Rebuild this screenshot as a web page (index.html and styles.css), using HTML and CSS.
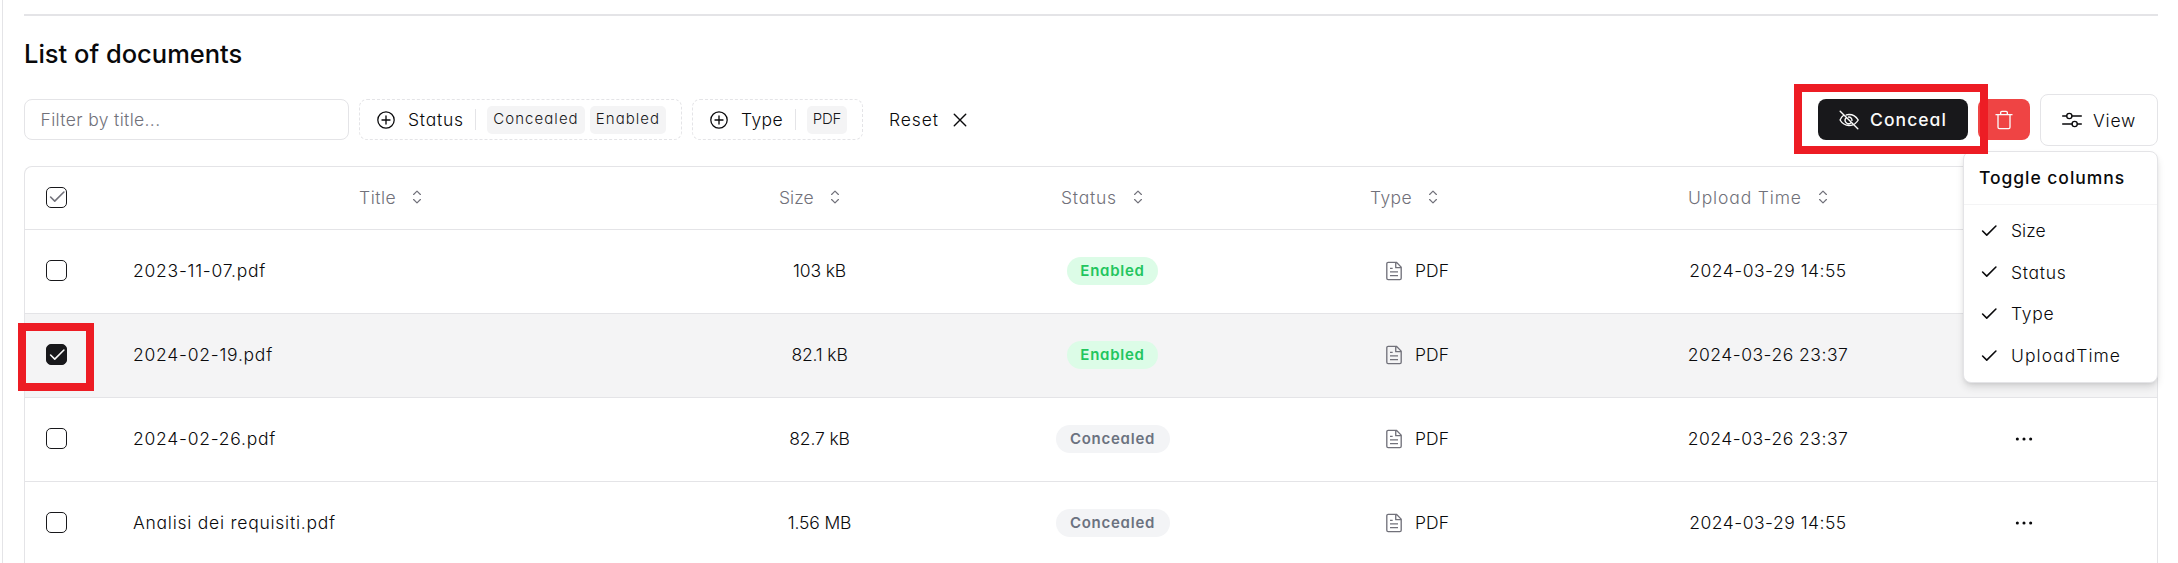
FILE: index.html
```
<!DOCTYPE html>
<html lang="en">
<head>
<meta charset="utf-8">
<title>List of documents</title>
<link rel="stylesheet" href="styles.css">
</head>
<body>
<svg class="sprite" aria-hidden="true">
  <symbol id="plus" viewBox="0 0 15 15"><path fill-rule="evenodd" d="M7.5.877a6.623 6.623 0 1 0 0 13.246A6.623 6.623 0 0 0 7.5.877ZM1.827 7.5a5.673 5.673 0 1 1 11.346 0 5.673 5.673 0 0 1-11.346 0ZM7.5 4a.5.5 0 0 1 .5.5V7h2.5a.5.5 0 1 1 0 1H8v2.5a.5.5 0 0 1-1 0V8H4.500a.5.5 0 0 1 0-1H7V4.500a.5.5 0 0 1 .5-.5Z"/></symbol>
  <symbol id="cross" viewBox="0 0 15 15"><path d="M3.2 3.2l8.600 8.600M11.800 3.200l-8.600 8.600" fill="none" stroke="currentColor" stroke-width="1.050" stroke-linecap="round"/></symbol>
  <symbol id="sort" viewBox="0 0 15 15"><path d="M4.950 5.600L7.500 3.100l2.550 2.500M4.950 9.400l2.550 2.500 2.550-2.500" fill="none" stroke="currentColor" stroke-width=".9" stroke-linecap="round" stroke-linejoin="round"/></symbol>
  <symbol id="check" viewBox="0 0 24 24"><path d="M20.300 6L9.300 17l-5-5" fill="none" stroke="currentColor" stroke-width="1.900" stroke-linecap="round" stroke-linejoin="round"/></symbol>
  <symbol id="mixer" viewBox="0 0 15 15"><g fill="none" stroke="currentColor" stroke-linecap="round"><path d="M.5 4.500h3M7.500 4.500h7M.5 10.500h7M11.500 10.500h3"/><circle cx="5.500" cy="4.500" r="1.950"/><circle cx="9.500" cy="10.500" r="1.950"/></g></symbol>
  <symbol id="trash" viewBox="0 0 15 15"><path d="M1.500 3.500h12M5 3.300V1.900q0-.9.9-.9h3.200q.9 0 .9.900v1.400M3 3.500V13q0 1 1 1h7q1 0 1-1V3.500" fill="none" stroke="currentColor" stroke-linecap="round" stroke-linejoin="round"/></symbol>
  <symbol id="file" viewBox="0 0 15 15"><path d="M9.300 1H3.100a1 1 0 0 0-1 1v11a1 1 0 0 0 1 1h8.800a1 1 0 0 0 1-1V4.600ZM8.800 1V5h4M4.500 5.500h2M4.500 8.200h6M4.500 11h6" fill="none" stroke="currentColor" stroke-linejoin="round"/></symbol>
  <symbol id="eyeoff" viewBox="0 0 15 15"><g fill="none" stroke="currentColor" stroke-width="1.050" stroke-linecap="round"><path d="M.9.900l13.200 13.200M3.300 4.100C2.100 4.900 1.500 6 .8 7.500c1.600 2.700 3.700 4.100 6.700 4.100 1.100 0 2-.2 2.900-.5M5.500 3.700c.6-.2 1.300-.3 2-.3 3 0 5.300 1.400 6.900 4.100-.7 1.200-1.500 2.100-2.500 2.800M5.400 5.900a2.500 2.500 0 0 0 3.600 3.600M7.200 5.300a2.300 2.300 0 0 1 2.500 2.500"/></g></symbol>
  <symbol id="dots" viewBox="0 0 15 15"><circle cx="2.500" cy="7.500" r="1.150"/><circle cx="7.500" cy="7.500" r="1.150"/><circle cx="12.500" cy="7.500" r="1.150"/></symbol>
</svg>
<main class="page">
  <h1 class="heading">List of documents</h1>
  <div class="toolbar">
    <div class="search"><span>Filter by title...</span></div>
    <button class="facet facet-status"><svg class="icon"><use href="#plus"/></svg><span class="facet-name">Status</span><i class="rule"></i><span class="tag tag-concealed">Concealed</span><span class="tag tag-enabled">Enabled</span></button>
    <button class="facet facet-type"><svg class="icon"><use href="#plus"/></svg><span class="facet-name">Type</span><i class="rule"></i><span class="tag tag-pdf">PDF</span></button>
    <button class="reset"><span>Reset</span><svg class="icon"><use href="#cross"/></svg></button>
    <div class="actions">
      <button class="conceal"><svg class="icon"><use href="#eyeoff"/></svg><span>Conceal</span></button>
      <button class="delete"><svg class="icon"><use href="#trash"/></svg></button>
      <button class="view"><svg class="icon"><use href="#mixer"/></svg><span>View</span></button>
      <div class="menu">
        <div class="menu-title">Toggle columns</div>
        <div class="menu-items">
          <div class="menu-item narrow"><svg class="icon"><use href="#check"/></svg><span>Size</span></div>
          <div class="menu-item"><svg class="icon"><use href="#check"/></svg><span>Status</span></div>
          <div class="menu-item"><svg class="icon"><use href="#check"/></svg><span>Type</span></div>
          <div class="menu-item wide"><svg class="icon"><use href="#check"/></svg><span>UploadTime</span></div>
        </div>
      </div>
      <div class="mark mark-conceal"></div>
    </div>
  </div>
  <section class="table">
    <div class="row head">
      <div class="cell pick"><span class="box some"><svg class="icon"><use href="#check"/></svg></span></div>
      <div class="cell h-title"><span>Title</span><svg class="icon"><use href="#sort"/></svg></div>
      <div class="cell h-size"><span>Size</span><svg class="icon"><use href="#sort"/></svg></div>
      <div class="cell h-status"><span>Status</span><svg class="icon"><use href="#sort"/></svg></div>
      <div class="cell h-type"><span>Type</span><svg class="icon"><use href="#sort"/></svg></div>
      <div class="cell h-time"><span>Upload Time</span><svg class="icon"><use href="#sort"/></svg></div>
      <div class="cell"></div>
    </div>
    <div class="row">
      <div class="cell pick"><span class="box"></span></div>
      <div class="cell name">2023-11-07.pdf</div>
      <div class="cell size">103 kB</div>
      <div class="cell"><span class="pill enabled">Enabled</span></div>
      <div class="cell kind"><svg class="icon"><use href="#file"/></svg><span>PDF</span></div>
      <div class="cell time">2024-03-29 14:55</div>
      <div class="cell"><svg class="icon"><use href="#dots"/></svg></div>
    </div>
    <div class="row selected">
      <div class="cell pick"><span class="box checked"><svg class="icon"><use href="#check"/></svg></span><span class="mark mark-check"></span></div>
      <div class="cell name">2024-02-19.pdf</div>
      <div class="cell size">82.1 kB</div>
      <div class="cell"><span class="pill enabled">Enabled</span></div>
      <div class="cell kind"><svg class="icon"><use href="#file"/></svg><span>PDF</span></div>
      <div class="cell time">2024-03-26 23:37</div>
      <div class="cell"><svg class="icon"><use href="#dots"/></svg></div>
    </div>
    <div class="row">
      <div class="cell pick"><span class="box"></span></div>
      <div class="cell name">2024-02-26.pdf</div>
      <div class="cell size">82.7 kB</div>
      <div class="cell"><span class="pill concealed">Concealed</span></div>
      <div class="cell kind"><svg class="icon"><use href="#file"/></svg><span>PDF</span></div>
      <div class="cell time">2024-03-26 23:37</div>
      <div class="cell"><svg class="icon"><use href="#dots"/></svg></div>
    </div>
    <div class="row">
      <div class="cell pick"><span class="box"></span></div>
      <div class="cell name">Analisi dei requisiti.pdf</div>
      <div class="cell size">1.56 MB</div>
      <div class="cell"><span class="pill concealed">Concealed</span></div>
      <div class="cell kind"><svg class="icon"><use href="#file"/></svg><span>PDF</span></div>
      <div class="cell time">2024-03-29 14:55</div>
      <div class="cell"><svg class="icon"><use href="#dots"/></svg></div>
    </div>
  </section>
</main>
</body>
</html>
```
FILE: styles.css
```
* { box-sizing: border-box; }
body {
  margin: 0;
  height: 563px;
  overflow: hidden;
  background: #fff;
  color: #09090b;
  font-family: Inter, "Open Sans", sans-serif;
  font-feature-settings: "cv11";
  font-size: 17.500px;
  font-weight: 300;
  line-height: 25px;
  white-space: nowrap;
}
.sprite { display: none; }
.icon { width: 20px; height: 20px; flex: none; fill: currentColor; }
button { font: inherit; font-feature-settings: inherit; color: inherit; background: none; border: 0; padding: 0; margin: 0; }
.page {
  margin-left: 2px;
  height: 563px;
  overflow: hidden;
  border-left: 1px solid #e4e4e7;
  padding: 14px 20px 0 21px;
}
.heading {
  margin: 0;
  border-top: 2px solid #e4e4e7;
  padding-top: 20px;
  height: 85px;
  font-size: 25.500px;
  font-weight: 500;
  line-height: 36px;
}
.toolbar { display: flex; gap: 10px; height: 67px; }
.search {
  width: 325px;
  height: 41px;
  border: 1px solid #e4e4e7;
  border-radius: 8px;
  padding: 7px 15.500px;
  color: #71717a;
  letter-spacing: .35px;
}
.facet {
  display: flex;
  align-items: center;
  height: 41px;
  border: 1px dashed #e4e4e7;
  border-radius: 8px;
  padding-left: 16px;
}
.facet-status { width: 323px; }
.facet-type { width: 171px; }
.facet-name { margin-left: 12px; width: 57px; text-align: left; letter-spacing: .75px; }
.facet-type .facet-name { width: 44px; letter-spacing: .4px; }
.rule { width: 1px; height: 21px; margin: 0 11px 0 10px; background: #e4e4e7; }
.tag {
  height: 28px;
  margin-right: 5px;
  border-radius: 5px;
  background: #f4f4f5;
  color: #18181b;
  font-size: 15px;
  line-height: 26px;
  text-align: center;
  letter-spacing: 1.050px;
}
.tag-concealed { width: 98px; }
.tag-enabled { width: 76px; }
.tag-pdf { width: 40px; letter-spacing: -.2px; }
.reset { display: flex; align-items: center; gap: 11px; height: 41px; margin-left: 16px; letter-spacing: .9px; }
.actions { position: relative; display: flex; gap: 10px; height: 41px; margin-left: auto; }
.conceal {
  display: flex; align-items: center; justify-content: center; gap: 11px;
  width: 150px; height: 41px; border-radius: 8px;
  background: #18181b; color: #fafafa; font-weight: 500; letter-spacing: 1.050px;
}
.delete {
  display: flex; align-items: center; justify-content: center;
  width: 52px; height: 41px; border-radius: 8px; background: #ef4444; color: #fafafa;
}
.view {
  display: flex; align-items: center; justify-content: center; gap: 11px;
  width: 118px; height: 52px; margin-top: -5px; border: 1px solid #e4e4e7; border-radius: 8px; letter-spacing: .7px;
}
.menu {
  position: absolute; right: 0; top: 52px; z-index: 2;
  width: 195px; height: 232px;
  border: 1px solid #e4e4e7; border-radius: 8px; background: #fff;
  box-shadow: 0 5px 8px -1px rgba(0,0,0,.12), 0 2px 5px -2px rgba(0,0,0,.12);
}
.menu-title { height: 53px; padding: 13px 15px 0; border-bottom: 1px solid #f4f4f5; font-weight: 500; letter-spacing: .95px; }
.menu-items { padding-top: 5px; }
.menu-item { display: flex; align-items: center; gap: 12px; height: 41.600px; padding-left: 15px; letter-spacing: .7px; }
.menu-item.narrow { letter-spacing: 0; }
.menu-item.wide { letter-spacing: 1.050px; }
.mark { position: absolute; z-index: 3; border: 8px solid #ed1c24; }
.mark-conceal { left: -24px; top: -15px; width: 194px; height: 70px; }
.mark-check { left: -7px; top: 9px; width: 76px; height: 68px; }
.table { height: 420px; border: 1px solid #e4e4e7; border-bottom: 0; border-radius: 8px 8px 0 0; }
.row {
  display: grid;
  grid-template-columns: 93px 483px 437px 149px 459px 244px 267px;
  height: 84px;
  border-bottom: 1px solid #e4e4e7;
}
.row.head { height: 63px; color: #71717a; }
.row.selected { background: #f4f4f5; }
.cell { position: relative; display: flex; align-items: center; justify-content: center; padding-bottom: 2px; }
.cell.pick { justify-content: flex-start; padding-left: 21px; }
.cell.name { justify-content: flex-start; padding-left: 15px; letter-spacing: .75px; }
.cell.size { letter-spacing: -.15px; }
.cell.time { letter-spacing: .5px; }
.head .cell { justify-content: flex-start; gap: 11px; }
.h-title { padding-left: 241px; letter-spacing: .5px; }
.h-size { padding-left: 178px; }
.h-status { padding-left: 23px; letter-spacing: .75px; }
.h-type { padding-left: 183px; letter-spacing: .4px; }
.h-time { padding-left: 42px; letter-spacing: .85px; }
.box {
  display: flex; align-items: center; justify-content: center;
  width: 21px; height: 21px; border: 1px solid #18181b; border-radius: 5px;
}
.box.checked { background: #18181b; color: #fafafa; }
.pill { height: 28px; border-radius: 14px; font-size: 15px; line-height: 27px; font-weight: 600; text-align: center; letter-spacing: .75px; }
.enabled { width: 91px; background: #dcfce7; color: #22c55e; }
.concealed { width: 114px; background: #f3f4f6; color: #6b7280; }
.kind { gap: 11px; }
.kind .icon { color: #71717a; }
```
